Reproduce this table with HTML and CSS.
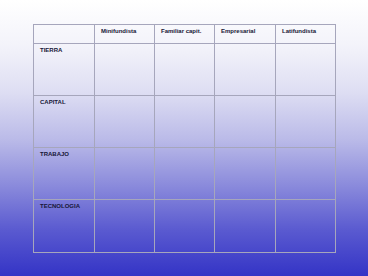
FILE: index.html
```html
<!DOCTYPE html>
<html lang="es">
<head>
<meta charset="utf-8">
<link rel="stylesheet" href="styles.css">
</head>
<body>
<div class="page">
  <table class="grid">
    <colgroup>
      <col class="c1"><col class="c2"><col class="c3"><col class="c4"><col class="c5">
    </colgroup>
    <tr class="head">
      <td></td>
      <td>Minifundista</td>
      <td>Familiar capit.</td>
      <td>Empresarial</td>
      <td>Latifundista</td>
    </tr>
    <tr class="row"><td>TIERRA</td><td></td><td></td><td></td><td></td></tr>
    <tr class="row"><td>CAPITAL</td><td></td><td></td><td></td><td></td></tr>
    <tr class="row"><td>TRABAJO</td><td></td><td></td><td></td><td></td></tr>
    <tr class="row last"><td>TECNOLOGIA</td><td></td><td></td><td></td><td></td></tr>
  </table>
</div>
</body>
</html>
```
FILE: styles.css
```css
html, body {
  margin: 0;
  padding: 0;
  height: 100%;
}
body {
  background: linear-gradient(to bottom,
    #ffffff 0px,
    #f3f3fa 46px,
    #dedef3 92px,
    #babae8 140px,
    #8c8cdc 184px,
    #5a5ad0 230px,
    #3434c6 276px);
  font-family: "Liberation Sans", Arial, sans-serif;
}
.page {
  padding: 24px 0 0 33px;
}
.grid {
  border-collapse: collapse;
  table-layout: fixed;
  width: 303px;
}
.c1 { width: 61px; }
.c2 { width: 60px; }
.c3 { width: 60px; }
.c4 { width: 61px; }
.c5 { width: 60px; }
.grid td {
  border: 1px solid #a6a6bc;
  padding: 3px 0 0 6px;
  vertical-align: top;
  font-size: 6px;
  line-height: 7px;
  font-weight: bold;
  color: #161636;
  white-space: nowrap;
  overflow: hidden;
}
.head td { height: 15px; }
.row td { height: 48px; }
.last td { height: 49px; }
```
